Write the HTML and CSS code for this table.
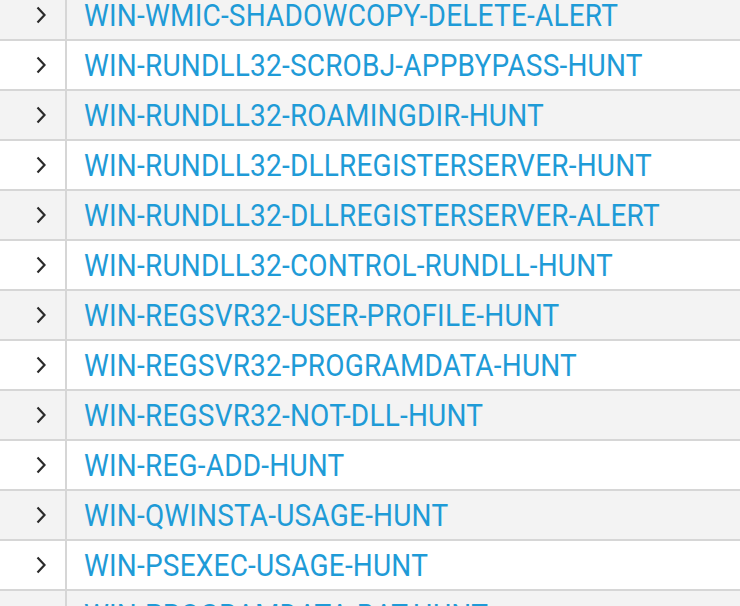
FILE: index.html
```html
<!DOCTYPE html>
<html lang="en">

<head>
    <meta charset="UTF-8">
    <title>Rules</title>
    <link rel="stylesheet" href="styles.css">
</head>

<body>
    <!-- rule list -->
    <div class="rule-table">
        <div class="rule-row odd"><div class="toggle"><svg viewBox="0 0 12 18"><polyline points="2.5,1.5 9.5,9 2.5,16.5"/></svg></div><div class="rule-name"><span>WIN-WMIC-SHADOWCOPY-DELETE-ALERT</span></div></div>
        <div class="rule-row"><div class="toggle"><svg viewBox="0 0 12 18"><polyline points="2.5,1.5 9.5,9 2.5,16.5"/></svg></div><div class="rule-name"><span>WIN-RUNDLL32-SCROBJ-APPBYPASS-HUNT</span></div></div>
        <div class="rule-row odd"><div class="toggle"><svg viewBox="0 0 12 18"><polyline points="2.5,1.5 9.5,9 2.5,16.5"/></svg></div><div class="rule-name"><span>WIN-RUNDLL32-ROAMINGDIR-HUNT</span></div></div>
        <div class="rule-row"><div class="toggle"><svg viewBox="0 0 12 18"><polyline points="2.5,1.5 9.5,9 2.5,16.5"/></svg></div><div class="rule-name"><span>WIN-RUNDLL32-DLLREGISTERSERVER-HUNT</span></div></div>
        <div class="rule-row odd"><div class="toggle"><svg viewBox="0 0 12 18"><polyline points="2.5,1.5 9.5,9 2.5,16.5"/></svg></div><div class="rule-name"><span>WIN-RUNDLL32-DLLREGISTERSERVER-ALERT</span></div></div>
        <div class="rule-row"><div class="toggle"><svg viewBox="0 0 12 18"><polyline points="2.5,1.5 9.5,9 2.5,16.5"/></svg></div><div class="rule-name"><span>WIN-RUNDLL32-CONTROL-RUNDLL-HUNT</span></div></div>
        <div class="rule-row odd"><div class="toggle"><svg viewBox="0 0 12 18"><polyline points="2.5,1.5 9.5,9 2.5,16.5"/></svg></div><div class="rule-name"><span>WIN-REGSVR32-USER-PROFILE-HUNT</span></div></div>
        <div class="rule-row"><div class="toggle"><svg viewBox="0 0 12 18"><polyline points="2.5,1.5 9.5,9 2.5,16.5"/></svg></div><div class="rule-name"><span>WIN-REGSVR32-PROGRAMDATA-HUNT</span></div></div>
        <div class="rule-row odd"><div class="toggle"><svg viewBox="0 0 12 18"><polyline points="2.5,1.5 9.5,9 2.5,16.5"/></svg></div><div class="rule-name"><span>WIN-REGSVR32-NOT-DLL-HUNT</span></div></div>
        <div class="rule-row"><div class="toggle"><svg viewBox="0 0 12 18"><polyline points="2.5,1.5 9.5,9 2.5,16.5"/></svg></div><div class="rule-name"><span>WIN-REG-ADD-HUNT</span></div></div>
        <div class="rule-row odd"><div class="toggle"><svg viewBox="0 0 12 18"><polyline points="2.5,1.5 9.5,9 2.5,16.5"/></svg></div><div class="rule-name"><span>WIN-QWINSTA-USAGE-HUNT</span></div></div>
        <div class="rule-row"><div class="toggle"><svg viewBox="0 0 12 18"><polyline points="2.5,1.5 9.5,9 2.5,16.5"/></svg></div><div class="rule-name"><span>WIN-PSEXEC-USAGE-HUNT</span></div></div>
        <div class="rule-row odd"><div class="toggle"><svg viewBox="0 0 12 18"><polyline points="2.5,1.5 9.5,9 2.5,16.5"/></svg></div><div class="rule-name"><span>WIN-PROGRAMDATA-BAT-HUNT</span></div></div>
    </div>
</body>

</html>
```

FILE: styles.css
```css
/* page */
body {
    margin: 0;
    font-family: Roboto, "Liberation Sans", sans-serif;
    background-color: #fff;
    overflow: hidden;
}

/* list scrolled a little, first row is cut at the top */
.rule-table {
    margin-top: -9px;
}

.rule-row {
    display: flex;
    height: 48px;
    border-bottom: 2px solid #d6d6d6;
    background-color: #fff;
}

.rule-row.odd {
    background-color: #f3f3f3;
}

/* expand arrow column */
.toggle {
    width: 67px;
    flex-shrink: 0;
    border-right: 2px solid #d6d6d6;
    display: flex;
    align-items: center;
    padding-left: 35px;
    box-sizing: border-box;
}

.toggle svg {
    width: 12px;
    height: 18px;
    fill: none;
    stroke: #2b2b2b;
    stroke-width: 2.2;
}

.rule-name {
    display: flex;
    align-items: center;
    padding-left: 17px;
    font-size: 28px;
    letter-spacing: 0.2px;
    color: #1f9bd7;
    white-space: nowrap;
}

/* the glyphs are drawn a bit taller than normal */
.rule-name span {
    display: inline-block;
    transform: scaleY(1.1);
}
```
